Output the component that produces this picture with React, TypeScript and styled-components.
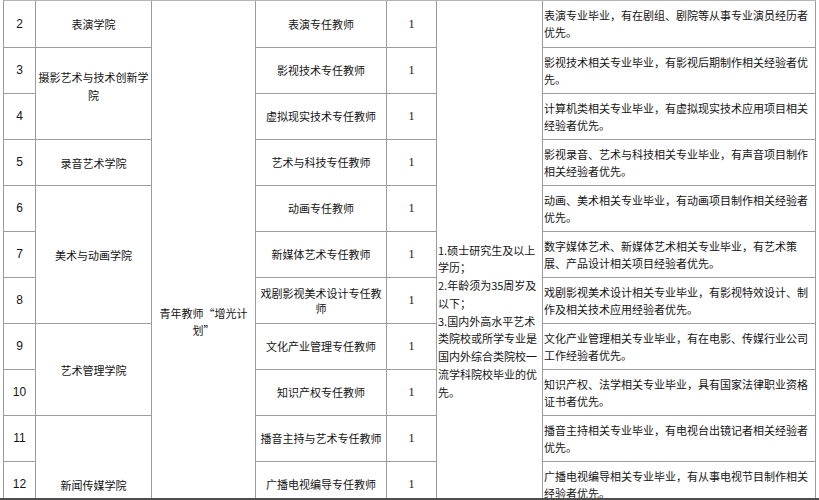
import React from "react";
import styled, { createGlobalStyle } from "styled-components";

const Global = createGlobalStyle`
  html, body { margin: 0; padding: 0; background: #ffffff; overflow: hidden; }
  body { font-family: "Noto Sans CJK SC", "Noto Sans", sans-serif; color: #111; }
`;

const Frame = styled.div`
  width: 819px;
  height: 500px;
  box-sizing: border-box;
  overflow: hidden;
  border-bottom: 2px solid #4d4d4d;
  background: #fff;
`;

const Table = styled.div`
  display: grid;
  grid-template-columns: 32px 116px 104px 131px 50px 106px 273px;
  grid-template-rows: 47px repeat(10, 46px);
  margin-left: 3px;
  width: max-content;
  border-left: 1px solid #9c9c9c;
  border-top: 1px solid #b4b4b4;
`;

type CellProps = {
  $col: number;
  $row: number;
  $span?: number;
  $left?: boolean;
  $lh?: number;
  $pt?: number;
  $pb?: number;
  $px?: number;
  $font?: "cjk" | "sans" | "serif";
};

const fontFor = (f?: string) =>
  f === "sans"
    ? `"Liberation Sans", Arial, sans-serif`
    : f === "serif"
    ? `"Liberation Serif", "Times New Roman", serif`
    : `"Noto Sans CJK SC", "Noto Sans", sans-serif`;

const Cell = styled.div<CellProps>`
  grid-column: ${(p) => p.$col};
  grid-row: ${(p) => p.$row} / span ${(p) => p.$span ?? 1};
  box-sizing: border-box;
  border-right: 1px solid #9c9c9c;
  border-bottom: 1px solid #9c9c9c;
  display: flex;
  align-items: center;
  justify-content: ${(p) => (p.$left ? "flex-start" : "center")};
  text-align: ${(p) => (p.$left ? "left" : "center")};
  padding: ${(p) => p.$pt ?? 0}px ${(p) => p.$px ?? 0}px ${(p) => p.$pb ?? 0}px
    ${(p) => (p.$left ? 1 : p.$px ?? 0)}px;
  font-family: ${(p) => fontFor(p.$font)};
  font-size: ${(p) => (p.$font === "sans" || p.$font === "serif" ? 12 : 11)}px;
  line-height: ${(p) => p.$lh ?? 17}px;
  color: #141414;
  overflow: hidden;
  word-break: normal;
  line-break: strict;
`;

const Lines = styled.div`
  display: block;
  width: 100%;
`;

const Item = styled.div`
  display: block;
`;

type Row = { n: number; pos: string; req: string };

const rows: Row[] = [
  { n: 2, pos: "表演专任教师", req: "表演专业毕业，有在剧组、剧院等从事专业演员经历者优先。" },
  { n: 3, pos: "影视技术专任教师", req: "影视技术相关专业毕业，有影视后期制作相关经验者优先。" },
  { n: 4, pos: "虚拟现实技术专任教师", req: "计算机类相关专业毕业，有虚拟现实技术应用项目相关经验者优先。" },
  { n: 5, pos: "艺术与科技专任教师", req: "影视录音、艺术与科技相关专业毕业，有声音项目制作相关经验者优先。" },
  { n: 6, pos: "动画专任教师", req: "动画、美术相关专业毕业，有动画项目制作相关经验者优先。" },
  { n: 7, pos: "新媒体艺术专任教师", req: "数字媒体艺术、新媒体艺术相关专业毕业，有艺术策展、产品设计相关项目经验者优先。" },
  { n: 8, pos: "戏剧影视美术设计专任教师", req: "戏剧影视美术设计相关专业毕业，有影视特效设计、制作及相关技术应用经验者优先。" },
  { n: 9, pos: "文化产业管理专任教师", req: "文化产业管理相关专业毕业，有在电影、传媒行业公司工作经验者优先。" },
  { n: 10, pos: "知识产权专任教师", req: "知识产权、法学相关专业毕业，具有国家法律职业资格证书者优先。" },
  { n: 11, pos: "播音主持与艺术专任教师", req: "播音主持相关专业毕业，有电视台出镜记者相关经验者优先。" },
  { n: 12, pos: "广播电视编导专任教师", req: "广播电视编导相关专业毕业，有从事电视节目制作相关经验者优先。" },
];

type College = { name: string; row: number; span: number; pt?: number; pb?: number };

const colleges: College[] = [
  { name: "表演学院", row: 1, span: 1 },
  { name: "摄影艺术与技术创新学院", row: 2, span: 2, pb: 16 },
  { name: "录音艺术学院", row: 4, span: 1 },
  { name: "美术与动画学院", row: 5, span: 3 },
  { name: "艺术管理学院", row: 8, span: 2 },
  { name: "新闻传媒学院", row: 10, span: 2, pt: 46 },
];

const general = [
  "1.硕士研究生及以上学历；",
  "2.年龄须为35周岁及以下；",
  "3.国内外高水平艺术类院校或所学专业是国内外综合类院校一流学科院校毕业的优先。",
];

export default function App() {
  return (
    <Frame lang="zh-CN">
      <Global />
      <Table>
        {rows.map((r, i) => (
          <React.Fragment key={r.n}>
            <Cell $col={1} $row={i + 1} $font="sans">
              {r.n}
            </Cell>
            <Cell $col={4} $row={i + 1} $lh={15} $px={4}>
              {r.pos}
            </Cell>
            <Cell $col={5} $row={i + 1} $font="serif">
              1
            </Cell>
            <Cell $col={7} $row={i + 1} $left>
              <Lines>{r.req}</Lines>
            </Cell>
          </React.Fragment>
        ))}
        {colleges.map((c) => (
          <Cell key={c.name} $col={2} $row={c.row} $span={c.span} $lh={18} $pt={c.pt} $pb={c.pb}>
            {c.name}
          </Cell>
        ))}
        <Cell $col={3} $row={1} $span={11} $lh={17} $pt={135} $px={7}>
          青年教师“增光计划”
        </Cell>
        <Cell $col={6} $row={1} $span={11} $left $lh={17.75} $pt={135} $px={2}>
          <Lines>
            {general.map((g) => (
              <Item key={g}>{g}</Item>
            ))}
          </Lines>
        </Cell>
      </Table>
    </Frame>
  );
}
